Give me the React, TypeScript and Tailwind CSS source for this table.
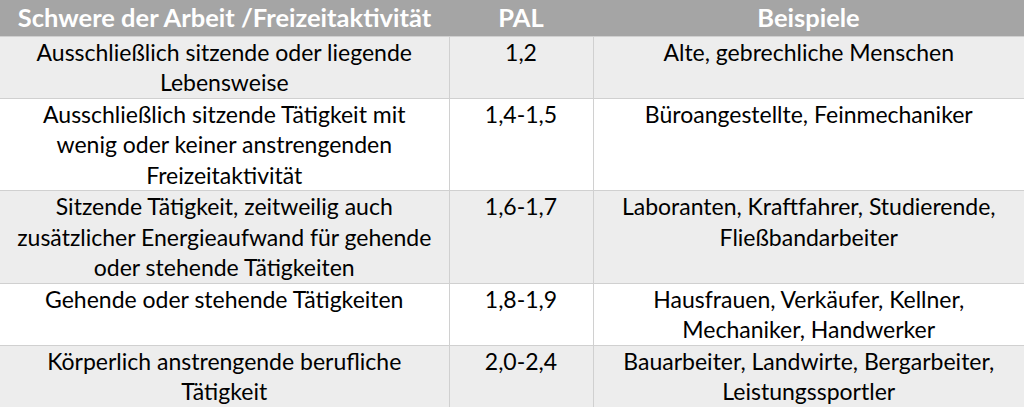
const rows = [
  {
    a: "Ausschließlich sitzende oder liegende Lebensweise",
    pal: "1,2",
    b: "Alte, gebrechliche Menschen",
  },
  {
    a: "Ausschließlich sitzende Tätigkeit mit wenig oder keiner anstrengenden Freizeitaktivität",
    pal: "1,4-1,5",
    b: "Büroangestellte, Feinmechaniker",
  },
  {
    a: "Sitzende Tätigkeit, zeitweilig auch zusätzlicher Energieaufwand für gehende oder stehende Tätigkeiten",
    pal: "1,6-1,7",
    b: "Laboranten, Kraftfahrer, Studierende, Fließbandarbeiter",
  },
  {
    a: "Gehende oder stehende Tätigkeiten",
    pal: "1,8-1,9",
    b: "Hausfrauen, Verkäufer, Kellner, Mechaniker, Handwerker",
  },
  {
    a: "Körperlich anstrengende berufliche Tätigkeit",
    pal: "2,0-2,4",
    b: "Bauarbeiter, Landwirte, Bergarbeiter, Leistungssportler",
  },
];

export default function App() {
  return (
    <div className="w-[1024px] h-[407px] bg-white overflow-hidden font-['Lato',sans-serif] text-[23px] text-black">
      <table className="w-full table-fixed border-collapse">
        <colgroup>
          <col className="w-[449px]" />
          <col className="w-[144px]" />
          <col />
        </colgroup>
        <thead>
          <tr className="bg-[#a5a5a5] text-white font-bold text-[25.5px] h-[36px]">
            <th className="px-1 leading-[35px] text-center whitespace-nowrap">Schwere der Arbeit /Freizeitaktivität</th>
            <th className="px-2 leading-[35px] text-center">PAL</th>
            <th className="px-2 leading-[35px] text-center">Beispiele</th>
          </tr>
        </thead>
        <tbody>
          {rows.map((r, i) => (
            <tr key={i} className={i % 2 === 0 ? "bg-[#ededed]" : "bg-white"}>
              <td className="border border-[#d0d0d0] border-l-0 px-3 align-top text-center leading-[30.5px]">
                {r.a}
              </td>
              <td className="border border-[#d0d0d0] px-2 align-top text-center leading-[30.5px]">
                {r.pal}
              </td>
              <td className="border border-[#d0d0d0] border-r-0 px-6 align-top text-center leading-[30.5px]">
                {r.b}
              </td>
            </tr>
          ))}
        </tbody>
      </table>
    </div>
  );
}
